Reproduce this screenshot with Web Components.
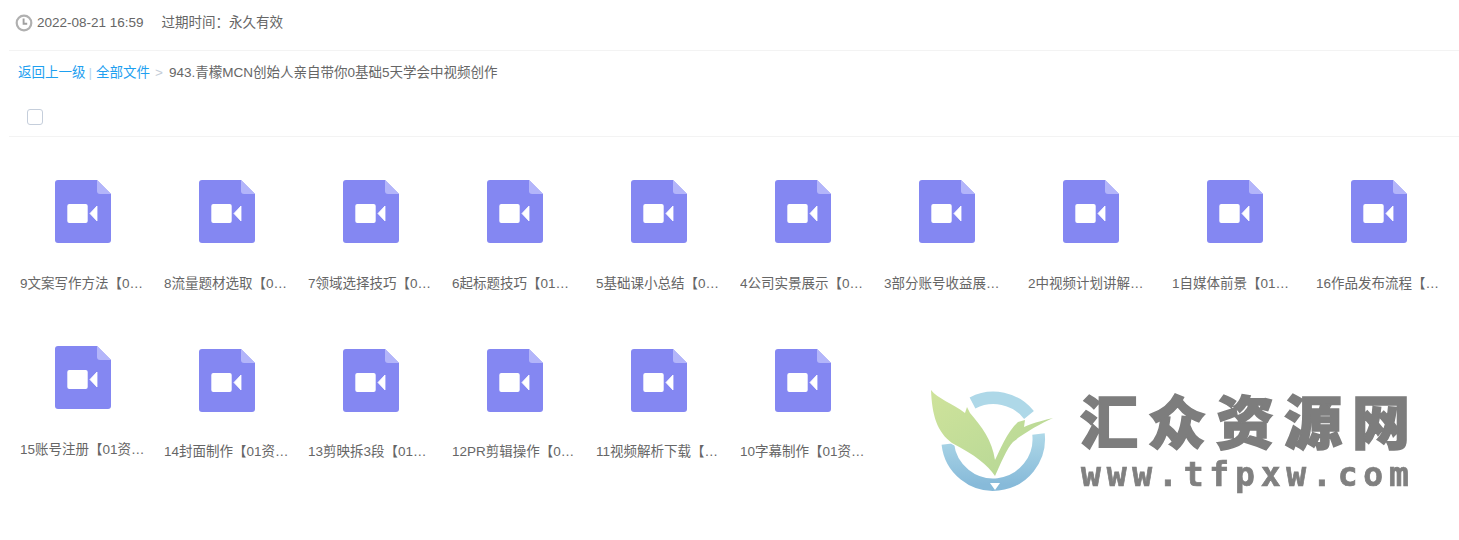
<!DOCTYPE html>
<html lang="zh"><head><meta charset="utf-8"><title>文件</title>
<style>
html,body{margin:0;padding:0;background:#fff}
body{font-family:"Liberation Sans","Noto Sans CJK SC",sans-serif;font-size:13.5px;color:#666;width:1459px;height:540px;overflow:hidden}
</style></head><body>
<share-page>
  <info-bar date="2022-08-21 16:59" expire="过期时间：永久有效"></info-bar>
  <bread-crumb title-text="943.青檬MCN创始人亲自带你0基础5天学会中视频创作"></bread-crumb>
  <select-bar></select-bar>
  <file-grid>
    <file-card gap="32" label="9文案写作方法【0…"></file-card>
    <file-card gap="32" label="8流量题材选取【0…"></file-card>
    <file-card gap="32" label="7领域选择技巧【0…"></file-card>
    <file-card gap="32" label="6起标题技巧【01…"></file-card>
    <file-card gap="32" label="5基础课小总结【0…"></file-card>
    <file-card gap="32" label="4公司实景展示【0…"></file-card>
    <file-card gap="32" label="3部分账号收益展…"></file-card>
    <file-card gap="32" label="2中视频计划讲解…"></file-card>
    <file-card gap="32" label="1自媒体前景【01…"></file-card>
    <file-card gap="32" label="16作品发布流程【…"></file-card>
    <file-card gap="32" label="15账号注册【01资…" lifted></file-card>
    <file-card label="14封面制作【01资…"></file-card>
    <file-card label="13剪映拆3段【01…"></file-card>
    <file-card label="12PR剪辑操作【0…"></file-card>
    <file-card label="11视频解析下载【…"></file-card>
    <file-card label="10字幕制作【01资…"></file-card>
  </file-grid>
  <water-mark></water-mark>
</share-page>
<script>
function def(name, html){
  customElements.define(name, class extends HTMLElement{
    constructor(){super();this.attachShadow({mode:'open'});}
    connectedCallback(){this.shadowRoot.innerHTML=typeof html==='function'?html(this):html;}
  });
}
def('share-page',`<style>:host{display:block;position:relative;width:1459px;height:540px;box-sizing:border-box;padding-left:9px}</style><slot></slot>`);
def('info-bar',e=>`<style>
:host{display:flex;align-items:center;height:51px;padding:0 0 5px 6px;box-sizing:border-box;border-bottom:1px solid #f3f3f3;color:#666;line-height:16px}
svg{width:18px;height:18px;margin-right:4px;flex:none}
.e{margin-left:18px}
</style>
<svg viewBox="0 0 18 18"><circle cx="9" cy="9" r="7.3" fill="none" stroke="#b0b0b0" stroke-width="2.2"/><path d="M8.6 4.6v5.2h3.6" fill="none" stroke="#a0a0a0" stroke-width="1.9"/></svg>
<span>${e.getAttribute('date')}</span><span class="e">${e.getAttribute('expire')}</span>`);
def('bread-crumb',e=>`<style>
:host{display:flex;align-items:center;height:43px;padding-left:9px;line-height:20px;white-space:nowrap}
a{color:#1ea0f0;text-decoration:none}.s{color:#b9d4ee;margin:0 4px 0 3px}.g{color:#c4cdd8;margin:0 6px 0 5px}
</style><a href="#">返回上一级</a><span class="s">|</span><a href="#">全部文件</a><span class="g">&gt;</span><span>${e.getAttribute('title-text')}</span>`);
def('select-bar',`<style>
:host{display:flex;align-items:flex-start;height:43px;padding:15px 0 0 18px;box-sizing:border-box;border-bottom:1px solid #f3f3f3}
i{display:block;width:16px;height:16px;box-sizing:border-box;border:1px solid #c5cedb;border-radius:3px;background:#fff}
</style><i></i>`);
def('file-grid',`<style>
:host{display:grid;grid-template-columns:repeat(10,144px);margin-left:2px;padding-top:43px;grid-auto-rows:169px}
</style><slot></slot>`);
def('file-card',e=>`<style>
:host{display:block;width:144px;box-sizing:border-box;padding:0 9px;${e.hasAttribute('lifted')?'margin-top:-3px;':''}}
svg{display:block;width:56px;height:63px;margin:0 auto ${e.getAttribute('gap')||31}px}
div{height:18px;line-height:18px;white-space:nowrap;overflow:hidden;text-align:left;color:#666}
</style>
<svg viewBox="0 0 56 63"><path d="M3 0H42L56 14V60a3 3 0 0 1-3 3H3a3 3 0 0 1-3-3V3a3 3 0 0 1 3-3Z" fill="#8487f2"/><path d="M42 0L56 14H45a3 3 0 0 1-3-3Z" fill="#b3b5fa"/><rect x="12.3" y="24" width="20.4" height="19" rx="2" fill="#fff"/><path d="M35 33.5 42 26V41Z" fill="#fff" stroke="#fff" stroke-width=".8" stroke-linejoin="round"/></svg>
<div>${e.getAttribute('label')}</div>`);
def('water-mark',`<style>
:host{position:absolute;left:925px;top:385px;width:490px;height:115px;display:block;pointer-events:none;filter:blur(.4px)}
svg{position:absolute;left:0;top:0;width:135px;height:112px}
.cn,.en{position:absolute;white-space:nowrap}
.cn{left:155px;top:4px;font:900 58px/60px "Noto Sans CJK SC",sans-serif;letter-spacing:10px;color:#7d7d7d;-webkit-text-stroke:1.6px #7d7d7d}
.en{left:156px;top:75px;font:700 33px/30px "DejaVu Sans Mono",monospace;letter-spacing:5.8px;color:#808080;-webkit-text-stroke:.7px #808080}
</style>
<svg viewBox="0 0 135 112">
<defs><linearGradient id="r" x1="0" y1="0" x2="0" y2="1"><stop offset="0" stop-color="#aed8e8"/><stop offset="1" stop-color="#87bad9"/></linearGradient>
<linearGradient id="l" x1="0" y1="0" x2="1" y2="1"><stop offset="0" stop-color="#cfe39b"/><stop offset="1" stop-color="#b3d695"/></linearGradient></defs>
<g fill="none" stroke-width="12.5"><path d="M47.5 18A45.5 45.5 0 0 1 104 30" stroke="#aed8e8"/><path d="M22.8 59A45.5 45.5 0 1 0 113.5 49" stroke="url(#r)"/></g>
<path d="M70 105 65 98 75 98Z" fill="#fff"/>
<path d="M6 5C13 14 27 18 40 28L42 22 45 28C57 42 67 55 70 75C75 65 82 47 93 37L100 35 99 42C110 37 120 35 128 33C117 38 100 47 88 57C82 63 75 80 70 91C63 80 50 70 27 58C12 47 7 30 6 5Z" fill="url(#l)" stroke="#fff" stroke-width="2" paint-order="stroke"/>
</svg>
<div class="cn">汇众资源网</div>
<div class="en">www.tfpxw.com</div>`);
</script>
</body></html>
